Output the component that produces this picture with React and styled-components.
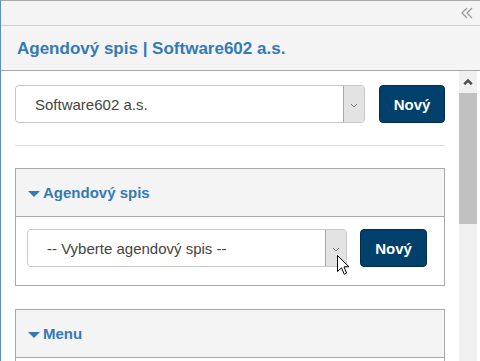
import styled, { createGlobalStyle } from "styled-components";

const Global = createGlobalStyle`
  html, body { margin: 0; padding: 0; overflow: hidden; background: #fff; }
  * { box-sizing: border-box; }
`;

function Chevron({ dir = "down", color = "#666", size = 8, weight = 1 }) {
  const d = dir === "down" ? "M1 2 L4 5 L7 2" : "M1 5 L4 2 L7 5";
  return (
    <svg width={size} height={size * 0.875} viewBox="0 0 8 7">
      <path d={d} fill="none" stroke={color} strokeWidth={weight} />
    </svg>
  );
}

function Cursor() {
  return (
    <CursorWrap>
      <svg width="13" height="21" viewBox="0 0 13 21">
        <path
          d="M0.5 0.5 L0.5 16.5 L4.5 12.8 L7.2 19.2 L9.6 18.2 L7 11.8 L12 11.8 Z"
          fill="#fff"
          stroke="#000"
          strokeWidth="1"
          strokeLinejoin="miter"
        />
      </svg>
    </CursorWrap>
  );
}

function Select({ value }) {
  return (
    <SelectBox>
      <SelectText>{value}</SelectText>
      <SelectArrow>
        <Chevron color="#777" />
      </SelectArrow>
    </SelectBox>
  );
}

export default function App() {
  return (
    <>
      <Global />
      <Frame>
        <TopBar>
          <svg width="12" height="12" viewBox="0 0 12 12">
            <path d="M6 1 L1 6 L6 11 M11 1 L6 6 L11 11" fill="none" stroke="#9a9a9a" strokeWidth="1.3" />
          </svg>
        </TopBar>
        <TitleBar>Agendový spis | Software602 a.s.</TitleBar>
        <Body>
          <Content>
            <Row>
              <Select value="Software602 a.s." />
              <Button $w={66}>Nový</Button>
            </Row>
            <Rule />
            <Panel>
              <PanelHead>
                <Caret />
                Agendový spis
              </PanelHead>
              <PanelBody>
                <Row $gap={13}>
                  <Select value="-- Vyberte agendový spis --" />
                  <Button $w={67}>Nový</Button>
                </Row>
                <Cursor />
              </PanelBody>
            </Panel>
            <Panel>
              <PanelHead>
                <Caret />
                Menu
              </PanelHead>
              <PanelBody />
            </Panel>
          </Content>
          <Scrollbar>
            <ScrollBtn>
              <Chevron dir="up" color="#505050" size={10} weight={2} />
            </ScrollBtn>
            <Thumb />
          </Scrollbar>
          <Edge />
        </Body>
      </Frame>
    </>
  );
}

const Frame = styled.div`
  width: 480px;
  height: 361px;
  display: flex;
  flex-direction: column;
  border-top: 1px solid #a9a9a9;
  border-left: 1px solid #5f8cc2;
  background: #fff;
  overflow: hidden;
  font-family: "Liberation Sans", Arial, sans-serif;
`;

const TopBar = styled.div`
  height: 25px;
  flex: none;
  background: #f4f4f4;
  border-bottom: 1px solid #cfcfcf;
  display: flex;
  justify-content: flex-end;
  align-items: center;
  padding-right: 7px;
`;

const TitleBar = styled.div`
  height: 45px;
  flex: none;
  background: #f4f4f4;
  border-bottom: 1px solid #a9a9a9;
  display: flex;
  align-items: center;
  padding: 2px 0 0 16px;
  color: #337ab7;
  font-weight: bold;
  font-size: 17px;
`;

const Body = styled.div`
  flex: 1;
  display: flex;
  min-height: 0;
`;

const Content = styled.div`
  flex: 1;
  padding: 14px 14px 0 14px;
  overflow: hidden;
`;

const Row = styled.div`
  display: flex;
  gap: ${(p) => p.$gap || 14}px;
  height: 38px;
`;

const SelectBox = styled.div`
  flex: 1;
  display: flex;
  border: 1px solid #c8c8c8;
  border-radius: 4px;
  overflow: hidden;
  background: #fff;
`;

const SelectText = styled.div`
  flex: 1;
  display: flex;
  align-items: center;
  padding-left: 19px;
  font-size: 15px;
  color: #444;
`;

const SelectArrow = styled.div`
  width: 21px;
  background: #e3e3e3;
  border-left: 1px solid #a8a8a8;
  display: flex;
  align-items: center;
  justify-content: center;
  padding-top: 2px;
`;

const Button = styled.div`
  width: ${(p) => p.$w}px;
  flex: none;
  background: #00406a;
  border: 1px solid #002e4f;
  border-radius: 4px;
  color: #fff;
  font-weight: bold;
  font-size: 15px;
  display: flex;
  align-items: center;
  justify-content: center;
`;

const Rule = styled.div`
  height: 1px;
  background: #dcdcdc;
  margin: 22px 0 22px;
`;

const Panel = styled.div`
  border: 1px solid #a9a9a9;
  margin-bottom: 23px;
`;

const PanelHead = styled.div`
  height: 48px;
  background: #f4f4f4;
  border-bottom: 1px solid #a9a9a9;
  display: flex;
  align-items: center;
  padding-left: 12px;
  color: #337ab7;
  font-weight: bold;
  font-size: 15px;
`;

const Caret = styled.span`
  width: 0;
  height: 0;
  border-left: 6px solid transparent;
  border-right: 6px solid transparent;
  border-top: 6px solid #337ab7;
  margin: 2px 3px 0 0;
`;

const PanelBody = styled.div`
  position: relative;
  padding: 12px 17px 18px 11px;
  min-height: 40px;
`;

const CursorWrap = styled.div`
  position: absolute;
  left: 321px;
  top: 38px;
  line-height: 0;
`;

const Scrollbar = styled.div`
  width: 18px;
  flex: none;
  background: #f0f0f0;
  display: flex;
  flex-direction: column;
`;

const ScrollBtn = styled.div`
  height: 22px;
  display: flex;
  align-items: center;
  justify-content: center;
`;

const Thumb = styled.div`
  height: 131px;
  background: #c1c1c1;
`;

const Edge = styled.div`
  width: 3px;
  flex: none;
  background: #fff;
`;
